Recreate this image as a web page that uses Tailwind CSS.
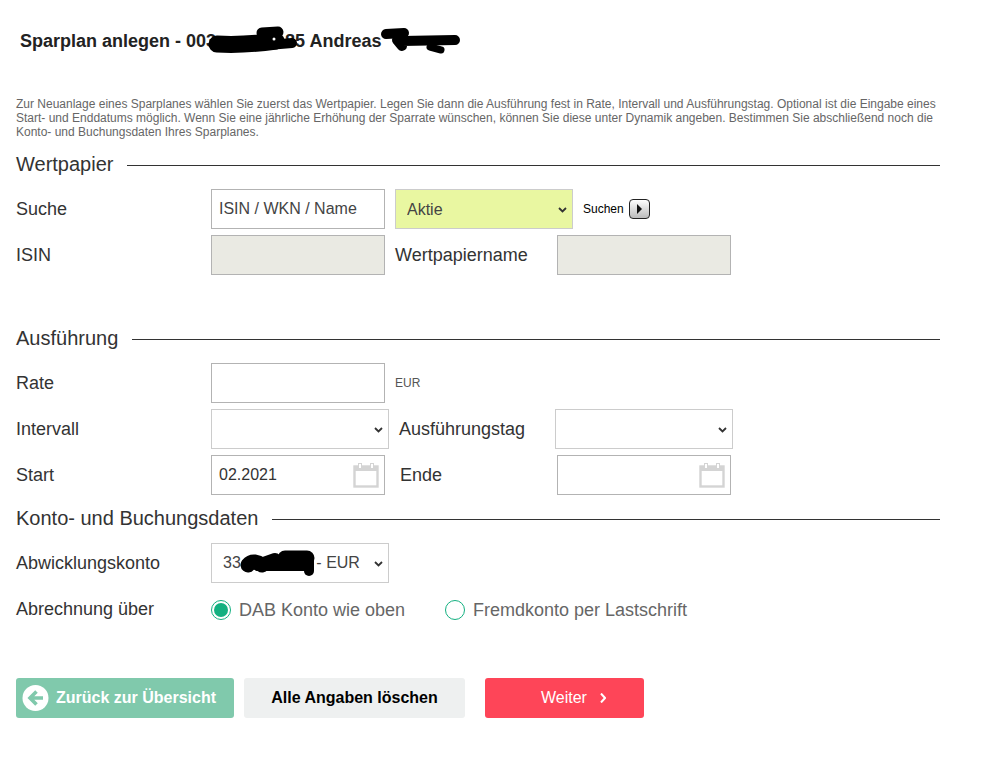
<!DOCTYPE html>
<html lang="de">
<head>
<meta charset="utf-8">
<title>Sparplan anlegen</title>
<script src="https://cdn.jsdelivr.net/npm/@tailwindcss/browser@4"></script>
</head>
<body class="bg-white font-['Liberation_Sans',Arial,sans-serif] text-[#333]">
<main class="relative w-[985px] h-[772px] overflow-hidden px-4">
  <h1 class="relative pl-1 pt-[31px] h-[96px] text-[18px] leading-5 font-bold text-[#222]">Sparplan anlegen - 003<span class="inline-block w-[69px]"></span>85 Andreas
    <svg class="absolute left-[184px] top-[20px]" width="290" height="40" viewBox="0 0 290 40" fill="none" stroke="#000" stroke-linecap="round"><path d="M17 24 C35 25 55 24 76 21" stroke-width="17"/><path d="M62 13 L78 12" stroke-width="11"/><path d="M68 25 L92 23" stroke-width="10"/><circle cx="74" cy="19" r="1.5" fill="#fff" stroke="none"/><path d="M186 14 L204 13" stroke-width="10"/><path d="M197 20 L202 26 M202 21 L255 20" stroke-width="10"/><path d="M230 27 L241 30" stroke-width="7"/></svg>
  </h1>
  <p class="w-[924px] h-[50px] text-[12px] leading-[14px] pt-px text-[#666]">Zur Neuanlage eines Sparplanes wählen Sie zuerst das Wertpapier. Legen Sie dann die Ausführung fest in Rate, Intervall und Ausführungstag. Optional ist die Eingabe eines Start- und Enddatums möglich. Wenn Sie eine jährliche Erhöhung der Sparrate wünschen, können Sie diese unter Dynamik angeben. Bestimmen Sie abschließend noch die Konto- und Buchungsdaten Ihres Sparplanes.</p>

  <section class="w-[924px]">
    <div class="flex items-center gap-[14px] h-9 text-[20px]"><h2 class="font-normal">Wertpapier</h2><div class="flex-1 h-px mt-[2px] bg-[#333]"></div></div>
    <div class="flex items-center h-10 mt-[7px] text-[18px]">
      <label class="w-[195px]">Suche</label>
      <input class="w-[174px] h-10 border border-[#b3b3b3] px-[7px] text-[16px] placeholder:text-[#444]" placeholder="ISIN / WKN / Name">
      <div class="relative ml-2.5 w-[178px] h-10">
        <select class="appearance-none w-full h-full border border-[#ccc] bg-[#e9f7a1] pl-[11px] pt-[2px] text-[16px] text-[#444]"><option>Aktie</option></select>
        <svg class="absolute right-[6px] top-[18px] pointer-events-none" width="9" height="6" viewBox="0 0 9 6" fill="none"><path d="M1 1 L4.5 4.5 L8 1" stroke="#333" stroke-width="1.8"/></svg>
      </div>
      <span class="ml-2.5 text-[12px] text-black">Suchen</span>
      <button class="ml-[5px] w-[21px] h-5 rounded-[4px] border border-[#222] bg-gradient-to-b from-white to-[#bbb] flex items-center justify-center" aria-label="Suchen"><svg width="7" height="10" viewBox="0 0 7 10"><path d="M1 0 L6 5 L1 10 Z" fill="#111"/></svg></button>
    </div>
    <div class="flex items-center h-10 mt-1.5 text-[18px]">
      <label class="w-[195px]">ISIN</label>
      <div class="w-[174px] h-10 border border-[#b3b3b3] bg-[#eaeae3]"></div>
      <label class="ml-2.5 w-[162px]">Wertpapiername</label>
      <div class="w-[174px] h-10 border border-[#b3b3b3] bg-[#eaeae3]"></div>
    </div>
  </section>

  <section class="w-[924px] mt-[45px]">
    <div class="flex items-center gap-[14px] h-[36px] text-[20px]"><h2 class="font-normal">Ausführung</h2><div class="flex-1 h-px mt-[2px] bg-[#333]"></div></div>
    <div class="flex items-center h-10 mt-[7px] text-[18px]">
      <label class="w-[195px]">Rate</label>
      <input class="w-[174px] h-10 border border-[#b3b3b3] px-[7px] text-[16px]">
      <span class="ml-2.5 text-[12px] text-[#555]">EUR</span>
    </div>
    <div class="flex items-center h-10 mt-1.5 text-[18px]">
      <label class="w-[195px]">Intervall</label>
      <div class="relative w-[178px] h-10">
        <select class="appearance-none w-full h-full border border-[#ccc] bg-white text-[16px]"><option></option></select>
        <svg class="absolute right-[6px] top-[18px] pointer-events-none" width="9" height="6" viewBox="0 0 9 6" fill="none"><path d="M1 1 L4.5 4.5 L8 1" stroke="#333" stroke-width="1.8"/></svg>
      </div>
      <label class="ml-2.5 w-[156px]">Ausführungstag</label>
      <div class="relative w-[178px] h-10">
        <select class="appearance-none w-full h-full border border-[#ccc] bg-white text-[16px]"><option></option></select>
        <svg class="absolute right-[6px] top-[18px] pointer-events-none" width="9" height="6" viewBox="0 0 9 6" fill="none"><path d="M1 1 L4.5 4.5 L8 1" stroke="#333" stroke-width="1.8"/></svg>
      </div>
    </div>
    <div class="flex items-center h-10 mt-1.5 text-[18px]">
      <label class="w-[195px]">Start</label>
      <div class="w-[174px] h-10 border border-[#b3b3b3] flex items-center justify-between pl-[7px] pr-[5px] text-[16px]">
        <span>02.2021</span>
        <svg width="26" height="26" viewBox="0 0 26 26" fill="none"><rect x="1.5" y="4.5" width="23" height="20" stroke="#d4d4d4" stroke-width="2.4"/><rect x="1" y="4" width="24" height="5" fill="#d4d4d4"/><rect x="5.5" y="1.5" width="3" height="5" fill="#fff" stroke="#d4d4d4"/><rect x="17.5" y="1.5" width="3" height="5" fill="#fff" stroke="#d4d4d4"/></svg>
      </div>
      <label class="ml-[15px] w-[157px]">Ende</label>
      <div class="w-[174px] h-10 border border-[#b3b3b3] flex items-center justify-end pr-[5px]">
        <svg width="26" height="26" viewBox="0 0 26 26" fill="none"><rect x="1.5" y="4.5" width="23" height="20" stroke="#d4d4d4" stroke-width="2.4"/><rect x="1" y="4" width="24" height="5" fill="#d4d4d4"/><rect x="5.5" y="1.5" width="3" height="5" fill="#fff" stroke="#d4d4d4"/><rect x="17.5" y="1.5" width="3" height="5" fill="#fff" stroke="#d4d4d4"/></svg>
      </div>
    </div>
  </section>

  <section class="w-[924px] mt-[5px]">
    <div class="flex items-center gap-[14px] h-9 text-[20px]"><h2 class="font-normal">Konto- und Buchungsdaten</h2><div class="flex-1 h-px mt-[2px] bg-[#333]"></div></div>
    <div class="flex items-center h-10 mt-[7px] text-[18px]">
      <label class="w-[195px]">Abwicklungskonto</label>
      <div class="relative w-[178px] h-10">
        <select class="appearance-none w-full h-full border border-[#ccc] bg-white pl-[11px] text-[16px] text-[#444]"><option>33&nbsp;&nbsp;&nbsp;&nbsp;&nbsp;&nbsp;&nbsp;&nbsp;&nbsp;&nbsp;&nbsp;&nbsp;&nbsp;&nbsp;&nbsp;&nbsp;&nbsp;- EUR</option></select>
        <svg class="absolute right-[6px] top-[18px] pointer-events-none" width="9" height="6" viewBox="0 0 9 6" fill="none"><path d="M1 1 L4.5 4.5 L8 1" stroke="#333" stroke-width="1.8"/></svg>
        <svg class="absolute left-0 top-0 pointer-events-none" width="178" height="40" viewBox="0 0 178 40" fill="none" stroke="#000" stroke-linecap="round"><path d="M37 22 C41 17 47 19 51 22" stroke-width="15"/><path d="M47 22 L64 16" stroke-width="12"/><path d="M74 15 L96 15" stroke-width="15"/><path d="M66 20 L94 20" stroke-width="13"/><path d="M51 24 L94 24" stroke-width="8"/><path d="M98 17 L98 28" stroke-width="10"/></svg>
      </div>
    </div>
    <div class="flex items-center h-[22px] mt-[16px] text-[18px] text-[#666]">
      <label class="w-[195px] mb-[2px] text-[#333]">Abrechnung über</label>
      <span class="w-5 h-5 rounded-full border border-[#13b080] flex items-center justify-center"><span class="w-3.5 h-3.5 rounded-full bg-[#13b080]"></span></span>
      <span class="ml-2 w-[206px]">DAB Konto wie oben</span>
      <span class="w-5 h-5 rounded-full border border-[#13b080]"></span>
      <span class="ml-2">Fremdkonto per Lastschrift</span>
    </div>
  </section>

  <div class="flex items-center mt-[57px]">
    <a class="w-[218px] h-10 rounded-[3px] bg-[#80c9ac] flex items-center pl-[6px] gap-[6px] text-[16px] font-bold text-white">
      <svg width="28" height="28" viewBox="0 0 28 28"><circle cx="13.5" cy="14" r="13" fill="#fff"/><path d="M21 14 H9 M14.5 7.5 L8 14 L14.5 20.5" stroke="#80c9ac" stroke-width="3.6" fill="none"/></svg>
      Zurück zur Übersicht
    </a>
    <a class="ml-2.5 w-[221px] h-10 rounded-[3px] bg-[#eef0f0] flex items-center justify-center text-[16px] font-bold text-black">Alle Angaben löschen</a>
    <a class="ml-5 w-[159px] h-10 rounded-[3px] bg-[#fe4558] flex items-center pl-[56px] gap-[13px] text-[16px] text-white">Weiter
      <svg width="6" height="10" viewBox="0 0 6 10"><path d="M1 0.5 L5 5 L1 9.5" stroke="#fff" stroke-width="2" fill="none"/></svg>
    </a>
  </div>
</main>
</body>
</html>
